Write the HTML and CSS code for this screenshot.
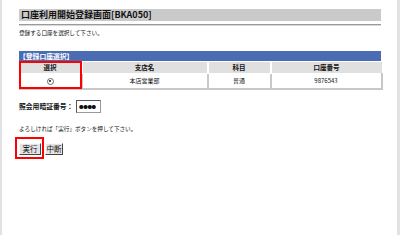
FILE: index.html
```html
<!DOCTYPE html>
<html lang="ja">
<head>
<meta charset="utf-8">
<title>口座利用開始登録画面</title>
<link rel="stylesheet" href="styles.css">
</head>
<body>
<div class="page">
  <div class="title">口座利用開始登録画面[BKA050]</div>
  <div class="rule"></div>
  <p class="msg first">登録する口座を選択して下さい。</p>

  <div class="tablewrap">
    <div class="caption">【登録口座選択】</div>
    <table class="accts">
      <colgroup>
        <col class="c1"><col class="c2"><col class="c3"><col class="c4">
      </colgroup>
      <tr>
        <th>選択</th><th>支店名</th><th>科目</th><th>口座番号</th>
      </tr>
      <tr>
        <td><span class="radio"></span></td><td>本店営業部</td><td>普通</td><td>9876543</td>
      </tr>
    </table>
    <div class="mark mark-col"></div>
  </div>

  <div class="pinrow">
    <span class="pinlabel">照会用暗証番号：</span>
    <span class="pinbox">●●●●</span>
  </div>

  <p class="msg second">よろしければ「実行」ボタンを押して下さい。</p>

  <div class="buttons">
    <span class="btn btn-run">実行</span>
    <span class="btn btn-stop">中断</span>
    <div class="mark mark-btn"></div>
  </div>
</div>
</body>
</html>
```

FILE: styles.css
```css
html, body {
  margin: 0;
  padding: 0;
  background: #fff;
}
body {
  font-family: "Noto Sans CJK JP", "DejaVu Sans", sans-serif;
  color: #111;
}
.page {
  box-sizing: border-box;
  width: 400px;
  height: 235px;
  border-left: 2px solid #e2e2e2;
  border-right: 3px solid #e2e2e2;
  padding: 9px 0 0 17px;
}
.title {
  width: 362px;
  height: 12px;
  background: #cacaca;
  font-size: 9px;
  font-weight: bold;
  line-height: 12px;
  padding-left: 2px;
  box-sizing: border-box;
}
.rule {
  width: 362px;
  margin-top: 3px;
  border-top: 1px solid #9a9a9a;
  border-bottom: 1px solid #d8d8d8;
}
.msg {
  margin: 0;
  font-size: 5.6px;
  line-height: 8px;
}
.msg.first {
  margin-top: 3px;
}
.tablewrap {
  position: relative;
  width: 362px;
  margin-top: 14px;
}
.caption {
  height: 10px;
  background: #4a6cb3;
  color: #fff;
  font-size: 6.8px;
  font-weight: bold;
  line-height: 10px;
}
.accts {
  width: 362px;
  border-collapse: collapse;
  table-layout: fixed;
  font-size: 6px;
}
.c1 { width: 62px; }
.c2 { width: 126px; }
.c3 { width: 63px; }
.c4 { width: 111px; }
.accts th {
  height: 11px;
  padding: 0;
  background: #e0e0e0;
  border-top: 1px solid #fff;
  border-right: 2px solid #fff;
  font-weight: bold;
  font-size: 6.5px;
  line-height: 11px;
  text-align: center;
}
.accts th:last-child { border-right: 0; }
.accts td {
  height: 14px;
  padding: 0;
  text-align: center;
  line-height: 14px;
  border-top: 1px solid #fff;
  border-bottom: 2px solid #c8c8c8;
  border-right: 2px solid #c8c8c8;
}
.accts td:first-child { border-left: 1px solid #c8c8c8; }
.radio {
  display: inline-block;
  width: 5px;
  height: 5px;
  border: 1px solid #666;
  border-radius: 50%;
  vertical-align: middle;
  position: relative;
  background: #fff;
}
.radio::after {
  content: "";
  position: absolute;
  left: 1.5px;
  top: 1.5px;
  width: 2px;
  height: 2px;
  border-radius: 50%;
  background: #111;
}
.mark {
  position: absolute;
  border: 2px solid #f00;
  box-sizing: border-box;
}
.mark-col {
  left: 0;
  top: 10px;
  width: 63px;
  height: 28px;
}
.pinrow {
  display: flex;
  align-items: center;
  margin-top: 9px;
  height: 14px;
}
.pinlabel {
  font-size: 6.8px;
  font-weight: bold;
  width: 57px;
}
.pinbox {
  box-sizing: border-box;
  width: 25px;
  height: 13px;
  border: 1px solid #999;
  border-top-color: #555;
  border-left-color: #555;
  font-size: 4.5px;
  line-height: 11px;
  padding-left: 2px;
  letter-spacing: -0.3px;
}
.msg.second {
  margin-top: 12px;
}
.buttons {
  position: relative;
  display: flex;
  gap: 4px;
  margin-top: 10px;
  margin-left: 0;
}
.btn {
  box-sizing: border-box;
  height: 12px;
  background: #e4e4e4;
  border: 1px solid;
  border-color: #fafafa #444 #444 #fafafa;
  font-size: 7.5px;
  line-height: 10px;
  text-align: center;
}
.btn-run { width: 22px; }
.btn-stop { width: 18px; }
.mark-btn {
  left: -4px;
  top: -6px;
  width: 29px;
  height: 22px;
}
```
